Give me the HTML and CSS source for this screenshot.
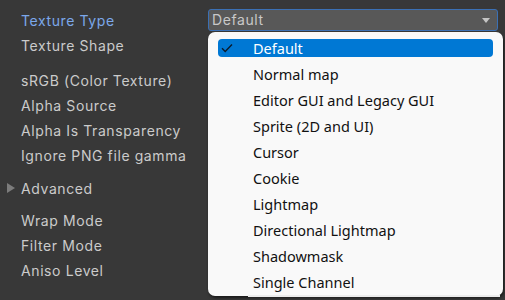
FILE: index.html
```html
<!DOCTYPE html>
<html>
<head>
<meta charset="utf-8">
<link rel="stylesheet" href="styles.css">
</head>
<body>
<div class="inspector">
  <div class="labels">
    <div class="row active">Texture Type</div>
    <div class="row">Texture Shape</div>
    <div class="row gap10">sRGB (Color Texture)</div>
    <div class="row">Alpha Source</div>
    <div class="row">Alpha Is Transparency</div>
    <div class="row">Ignore PNG file gamma</div>
    <div class="row foldout gap8"><span class="tri"></span>Advanced</div>
    <div class="row gap7">Wrap Mode</div>
    <div class="row">Filter Mode</div>
    <div class="row">Aniso Level</div>
  </div>
  <div class="fields">
    <div class="popup">
      <span class="popup-text">Default</span>
      <span class="popup-arrow"></span>
    </div>
  </div>
</div>
<div class="menu">
  <div class="item selected">
    <div class="item-inner">
      <svg class="check" width="12" height="10" viewBox="0 0 12 10"><path d="M1 5.2 L4.2 8.4 L11 1.4" fill="none" stroke="#0b1a2a" stroke-width="1.4"/></svg>
      <span>Default</span>
    </div>
  </div>
  <div class="item"><div class="item-inner"><span>Normal map</span></div></div>
  <div class="item"><div class="item-inner"><span>Editor GUI and Legacy GUI</span></div></div>
  <div class="item"><div class="item-inner"><span>Sprite (2D and UI)</span></div></div>
  <div class="item"><div class="item-inner"><span>Cursor</span></div></div>
  <div class="item"><div class="item-inner"><span>Cookie</span></div></div>
  <div class="item"><div class="item-inner"><span>Lightmap</span></div></div>
  <div class="item"><div class="item-inner"><span>Directional Lightmap</span></div></div>
  <div class="item"><div class="item-inner"><span>Shadowmask</span></div></div>
  <div class="item"><div class="item-inner"><span>Single Channel</span></div></div>
  <div class="menu-foot"></div>
</div>
</body>
</html>
```
FILE: styles.css
```css
html, body {
  margin: 0;
  padding: 0;
  background: #383838;
  width: 505px;
  height: 300px;
  overflow: hidden;
}
.inspector {
  display: grid;
  grid-template-columns: 208px 290px;
  padding-top: 8px;
  font-family: Inter, "Liberation Sans", sans-serif;
  font-size: 14px;
  letter-spacing: 0.6px;
  color: #cbcbcb;
}
.labels {
  display: flex;
  flex-direction: column;
}
.row {
  height: 25px;
  line-height: 25px;
  padding-left: 21px;
  white-space: nowrap;
  position: relative;
}
.row.active { color: #7ca8ea; }
.gap10 { margin-top: 10px; }
.gap8 { margin-top: 8px; }
.gap7 { margin-top: 7px; }
.tri {
  position: absolute;
  left: 7px;
  top: 7px;
  width: 0;
  height: 0;
  border-top: 5px solid transparent;
  border-bottom: 5px solid transparent;
  border-left: 8px solid #7c7c7c;
}
.fields {
  padding-top: 1px;
}
.popup {
  height: 20px;
  border: 1px solid #3b70b4;
  border-radius: 3px;
  background: #585858;
  display: flex;
  align-items: center;
  justify-content: space-between;
  padding: 0 7px 0 3px;
  color: #c8c8c8;
}
.popup-text { line-height: 20px; }
.popup-arrow {
  width: 0;
  height: 0;
  border-left: 4px solid transparent;
  border-right: 4px solid transparent;
  border-top: 5px solid #c4c4c4;
  margin-top: 1px;
}
.menu {
  position: absolute;
  left: 208px;
  top: 32px;
  width: 295px;
  height: 264px;
  box-sizing: border-box;
  background: #f9f9f9;
  border-radius: 7px;
  box-shadow: 1px 2px 3px rgba(0,0,0,0.55);
  padding-top: 3px;
  font-family: "Noto Sans", "Open Sans", sans-serif;
  font-size: 14.5px;
  color: #111;
}
.item {
  height: 26px;
  padding: 4px 10px;
  box-sizing: border-box;
}
.item-inner {
  height: 18px;
  display: flex;
  align-items: center;
  padding-left: 35px;
  position: relative;
  border-radius: 4px;
  white-space: nowrap;
}
.item.selected .item-inner {
  background: #0078d4;
  color: #fff;
}
.check {
  position: absolute;
  left: 3px;
  top: 4px;
}
.menu-foot {
  margin: 0 3px 0 40px;
  height: 2px;
  background: #ececec;
}
```
